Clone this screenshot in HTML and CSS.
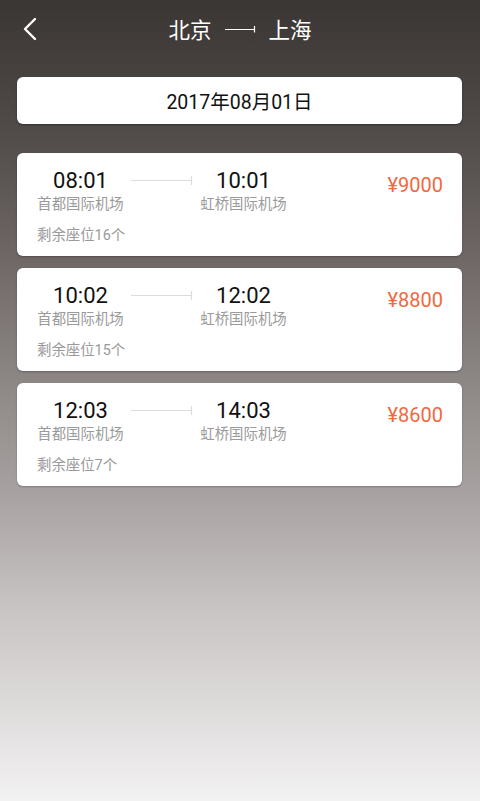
FILE: index.html
```html
<!DOCTYPE html>
<html lang="zh-CN">
<head>
<meta charset="utf-8">
<title>北京 - 上海</title>
<link rel="stylesheet" href="styles.css">
</head>
<body>
<div class="page">
  <header class="header">
    <svg class="back" width="16" height="24" viewBox="0 0 16 24"><path d="M13 2 L3 12 L13 22" fill="none" stroke="#fff" stroke-width="2.4" stroke-linecap="round" stroke-linejoin="round"/></svg>
    <div class="title">
      <span>北京</span>
      <svg class="route" width="31" height="8" viewBox="0 0 31 8"><path d="M0 4.5 H29.5 M29.5 1 V7.5" stroke="#fff" stroke-width="1.2" fill="none"/></svg>
      <span>上海</span>
    </div>
  </header>

  <div class="date">2017年08月01日</div>

  <div class="list">
    <div class="card">
      <div class="main">
        <div class="col">
          <div class="time">08:01</div>
          <div class="airport">首都国际机场</div>
        </div>
        <svg class="line" width="62" height="12" viewBox="0 0 62 12"><path d="M0 5.5 H60 M60.5 1 V10" stroke="#dcdcdc" stroke-width="1.2" fill="none"/></svg>
        <div class="col">
          <div class="time">10:01</div>
          <div class="airport">虹桥国际机场</div>
        </div>
        <div class="price">¥9000</div>
      </div>
      <div class="seats">剩余座位16个</div>
    </div>

    <div class="card">
      <div class="main">
        <div class="col">
          <div class="time">10:02</div>
          <div class="airport">首都国际机场</div>
        </div>
        <svg class="line" width="62" height="12" viewBox="0 0 62 12"><path d="M0 5.5 H60 M60.5 1 V10" stroke="#dcdcdc" stroke-width="1.2" fill="none"/></svg>
        <div class="col">
          <div class="time">12:02</div>
          <div class="airport">虹桥国际机场</div>
        </div>
        <div class="price">¥8800</div>
      </div>
      <div class="seats">剩余座位15个</div>
    </div>

    <div class="card">
      <div class="main">
        <div class="col">
          <div class="time">12:03</div>
          <div class="airport">首都国际机场</div>
        </div>
        <svg class="line" width="62" height="12" viewBox="0 0 62 12"><path d="M0 5.5 H60 M60.5 1 V10" stroke="#dcdcdc" stroke-width="1.2" fill="none"/></svg>
        <div class="col">
          <div class="time">14:03</div>
          <div class="airport">虹桥国际机场</div>
        </div>
        <div class="price">¥8600</div>
      </div>
      <div class="seats">剩余座位7个</div>
    </div>
  </div>
</div>
</body>
</html>
```

FILE: styles.css
```css
html, body {
  margin: 0;
  padding: 0;
}
body {
  width: 480px;
  height: 801px;
  overflow: hidden;
  font-family: Roboto, "Noto Sans CJK SC", sans-serif;
  background: linear-gradient(to bottom, #3a3633 0%, #524c4a 17.5%, #6f6866 32.5%, #a9a4a3 62.4%, #c6c2c1 75%, #f3f2f2 100%);
}
.page {
  display: flex;
  flex-direction: column;
  padding: 0 18px 0 17px;
}
.header {
  position: relative;
  height: 60px;
  display: flex;
  align-items: center;
  justify-content: center;
}
.back {
  position: absolute;
  left: 5px;
  top: 17px;
}
.title {
  display: flex;
  align-items: center;
  gap: 13px;
  color: #fff;
  font-size: 21.5px;
  line-height: 28px;
  font-family: "Noto Sans CJK SC", sans-serif;
  margin-left: 1px;
  margin-top: -3px;
}
.date {
  margin-top: 17px;
  height: 47px;
  background: #fff;
  border-radius: 6px;
  display: flex;
  align-items: center;
  justify-content: center;
  font-size: 19.5px;
  color: #111;
  box-shadow: 0 1px 2px rgba(0,0,0,0.35);
}
.list {
  margin-top: 29px;
  display: flex;
  flex-direction: column;
  gap: 12px;
}
.card {
  height: 103px;
  box-sizing: border-box;
  background: #fff;
  border-radius: 6px;
  padding: 15px 19px 0 20px;
  box-shadow: 0 1px 2px rgba(0,0,0,0.25);
}
.main {
  display: flex;
  align-items: flex-start;
}
.col {
  width: 87px;
  display: flex;
  flex-direction: column;
  align-items: center;
}
.time {
  font-size: 22px;
  line-height: 26px;
  color: #111;
}
.airport {
  margin-top: 2px;
  font-size: 14.4px;
  line-height: 18px;
  color: #9a9a9a;
  white-space: nowrap;
}
.line {
  margin: 7px 7px 0 7px;
  flex: none;
}
.price {
  margin-left: auto;
  margin-top: 5px;
  font-size: 20px;
  line-height: 24px;
  color: #f2683f;
}
.seats {
  margin-top: 13px;
  font-size: 14.4px;
  line-height: 18px;
  color: #9a9a9a;
}
```
